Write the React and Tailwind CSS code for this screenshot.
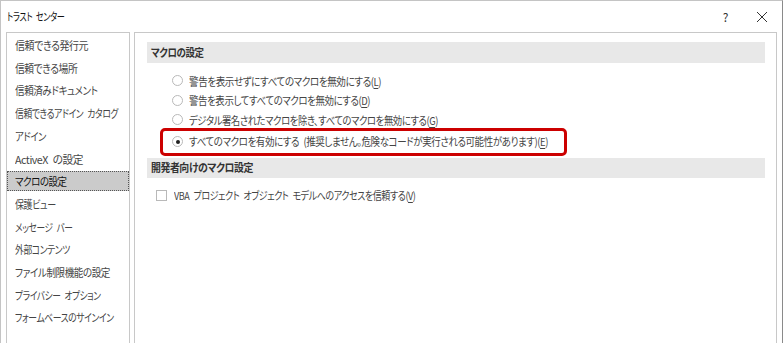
import React from "react";

const leftItems = [
  ["信頼できる発行元", "scale-x-[0.91]"],
  ["信頼できる場所", "scale-x-[0.89]"],
  ["信頼済みドキュメント", "scale-x-[0.87]"],
  ["信頼できるアドイン カタログ", "scale-x-[0.80]"],
  ["アドイン", "scale-x-[0.85]"],
  ["ActiveX の設定", "scale-x-[0.97]"],
  ["マクロの設定", "scale-x-[0.86]"],
  ["保護ビュー", "scale-x-[0.82]"],
  ["メッセージ バー", "scale-x-[0.79]"],
  ["外部コンテンツ", "scale-x-[0.80]"],
  ["ファイル制限機能の設定", "scale-x-[0.87]"],
  ["プライバシー オプション", "scale-x-[0.79]"],
  ["フォームベースのサインイン", "scale-x-[0.80]"],
];

const font = {
  fontFamily: '"Noto Sans CJK JP", "Noto Sans", sans-serif',
};

function Radio({ checked }) {
  return (
    <span className="relative inline-block w-[11px] h-[11px] rounded-full border border-[#b9b9b9] bg-white shrink-0">
      {checked && (
        <span className="absolute left-[2.5px] top-[2.5px] w-[4px] h-[4px] rounded-full bg-[#222]" />
      )}
    </span>
  );
}

function Label({ text, k, cls }) {
  return (
    <span className={"inline-block origin-left whitespace-nowrap " + cls}>
      {text}(<span className="underline underline-offset-2">{k}</span>)
    </span>
  );
}

export default function App() {
  return (
    <div
      className="w-[783px] h-[343px] bg-white border-l border-t border-[#c4c4c4] border-r-[#8a8a8a] border-r flex flex-col text-[11px] tracking-[-0.5px] [word-spacing:3px] [font-feature-settings:'palt'] overflow-hidden"
      style={font}
    >
      <div className="h-[31px] flex items-center justify-between pl-[6px] pr-[14px] shrink-0">
        <span className="inline-block origin-left scale-x-[0.74] whitespace-nowrap text-[#111]">
          トラスト センター
        </span>
        <div className="flex items-center gap-[28px] text-[#333]">
          <span className="text-[12px]">?</span>
          <svg width="12" height="12" viewBox="0 0 12 12">
            <path d="M1 1L11 11M11 1L1 11" stroke="#333" strokeWidth="1" />
          </svg>
        </div>
      </div>
      <div className="flex flex-1 min-h-0 pl-[5px] pr-[5px] gap-[4px]">
        <div className="w-[124px] border-l border-t border-r border-[#c8c8c8] pt-[1px] text-[#444] overflow-hidden">
          {leftItems.map(([t, s]) => {
            const sel = t === "マクロの設定";
            return (
              <div key={t} className="h-[22.7px] flex items-center">
                <div
                  className={
                    sel
                      ? "w-full h-[20px] flex items-center pl-[7px] bg-[#cbcbcb] border border-dotted border-[#555] text-[#111]"
                      : "w-full flex items-center pl-[8px]"
                  }
                >
                  <span className={"inline-block origin-left whitespace-nowrap " + s}>{t}</span>
                </div>
              </div>
            );
          })}
        </div>
        <div className="flex-1 border-l border-t border-r border-[#c8c8c8] pl-[12px] pr-[11px] pt-[9px] text-[#444]">
          <div className="h-[21px] bg-[#e8e8e8] flex items-center pl-[4px] font-bold text-[#333]">
            <span className="inline-block origin-left scale-x-[0.86] whitespace-nowrap">マクロの設定</span>
          </div>
          <div className="pl-[25px] pt-[8px]">
            <div className="h-[19.5px] flex items-center gap-[6px]">
              <Radio />
              <Label text="警告を表示せずにすべてのマクロを無効にする" k="L" cls="scale-x-[0.87]" />
            </div>
            <div className="h-[19.5px] flex items-center gap-[6px]">
              <Radio />
              <Label text="警告を表示してすべてのマクロを無効にする" k="D" cls="scale-x-[0.86]" />
            </div>
            <div className="h-[19.5px] flex items-center gap-[6px]">
              <Radio />
              <Label text="デジタル署名されたマクロを除き、すべてのマクロを無効にする" k="G" cls="scale-x-[0.85]" />
            </div>
          </div>
          <div className="-mt-[2px] ml-[13px] w-[407px] h-[28px] border-[3px] border-[#cc0000] rounded-[5px] flex items-center pl-[9px] gap-[6px]">
            <Radio checked />
            <Label
              text="すべてのマクロを有効にする (推奨しません。危険なコードが実行される可能性があります)"
              k="E"
              cls="scale-x-[0.865]"
            />
          </div>
          <div className="mt-[2px] h-[20px] bg-[#e8e8e8] flex items-center pl-[4px] font-bold text-[#333]">
            <span className="inline-block origin-left scale-x-[0.90] whitespace-nowrap">開発者向けのマクロ設定</span>
          </div>
          <div className="pl-[9px] mt-[9px] h-[18px] flex items-center gap-[7px]">
            <span className="w-[11px] h-[11px] border border-[#b9b9b9] bg-white shrink-0" />
            <Label text="VBA プロジェクト オブジェクト モデルへのアクセスを信頼する" k="V" cls="scale-x-[0.82]" />
          </div>
        </div>
      </div>
    </div>
  );
}
